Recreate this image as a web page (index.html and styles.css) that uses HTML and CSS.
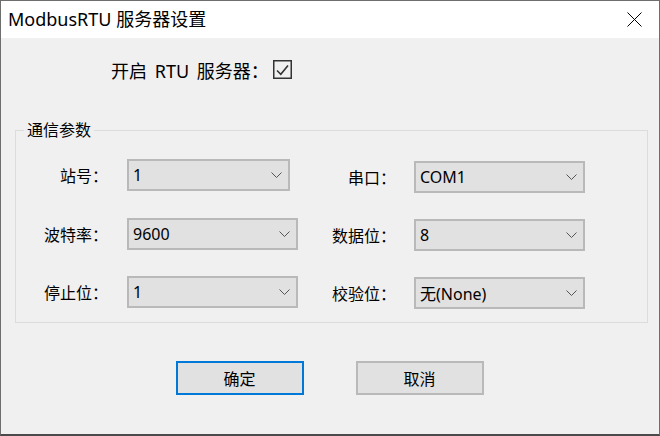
FILE: index.html
```html
<!DOCTYPE html>
<html lang="zh-CN">
  <head>
    <meta charset="UTF-8" />
    <meta name="viewport" content="width=device-width, initial-scale=1.0" />
    <title>ModbusRTU 服务器设置</title>
    <link rel="stylesheet" href="styles.css">
  </head>
  <body>
    <div class="dialog">
      <div class="title-bar">
        <span class="title">ModbusRTU 服务器设置</span>
        <svg class="close" width="15" height="15" viewBox="0 0 15 15">
          <path d="M0.5 0.5 L14.5 14.5 M14.5 0.5 L0.5 14.5" stroke="#000" stroke-width="1" fill="none" />
        </svg>
      </div>

      <div class="dialog-body">
        <div class="enable-row">
          <span>开启 RTU 服务器：</span>
          <svg class="checkbox" width="19" height="19" viewBox="0 0 19 19">
            <rect x="0.75" y="0.75" width="17.5" height="17.5" stroke="#333" stroke-width="1.5" fill="none" />
            <polyline points="4,10.5 7.8,14.2 15,5.5" stroke="#333" stroke-width="1.6" fill="none" />
          </svg>
        </div>

        <fieldset class="group">
          <legend>通信参数</legend>
          <div class="columns">
            <div class="column left">
              <label>站号：</label>
              <div class="combo narrow">
                <span>1</span>
                <svg width="11" height="6" viewBox="0 0 11 6"><polyline points="0.5,0.5 5.5,5.5 10.5,0.5" stroke="#555" fill="none" /></svg>
              </div>
              <label>波特率：</label>
              <div class="combo">
                <span>9600</span>
                <svg width="11" height="6" viewBox="0 0 11 6"><polyline points="0.5,0.5 5.5,5.5 10.5,0.5" stroke="#555" fill="none" /></svg>
              </div>
              <label>停止位：</label>
              <div class="combo">
                <span>1</span>
                <svg width="11" height="6" viewBox="0 0 11 6"><polyline points="0.5,0.5 5.5,5.5 10.5,0.5" stroke="#555" fill="none" /></svg>
              </div>
            </div>

            <div class="column right">
              <label>串口：</label>
              <div class="combo">
                <span>COM1</span>
                <svg width="11" height="6" viewBox="0 0 11 6"><polyline points="0.5,0.5 5.5,5.5 10.5,0.5" stroke="#555" fill="none" /></svg>
              </div>
              <label>数据位：</label>
              <div class="combo">
                <span>8</span>
                <svg width="11" height="6" viewBox="0 0 11 6"><polyline points="0.5,0.5 5.5,5.5 10.5,0.5" stroke="#555" fill="none" /></svg>
              </div>
              <label>校验位：</label>
              <div class="combo">
                <span>无(None)</span>
                <svg width="11" height="6" viewBox="0 0 11 6"><polyline points="0.5,0.5 5.5,5.5 10.5,0.5" stroke="#555" fill="none" /></svg>
              </div>
            </div>
          </div>
        </fieldset>

        <div class="buttons">
          <button type="button" class="btn default">确定</button>
          <button type="button" class="btn">取消</button>
        </div>
      </div>
    </div>
  </body>
</html>
```

FILE: styles.css
```css
body {
  margin: 0;
  font-family: "Noto Sans", "Noto Sans CJK SC", sans-serif;
  color: #000;
  background: #f0f0f0;
}

.dialog {
  width: 660px;
  height: 436px;
  box-sizing: border-box;
  border: 1px solid #6e6e6e;
  border-bottom: 2px solid #4a4a4a;
  background: #f0f0f0;
  display: flex;
  flex-direction: column;
}

.title-bar {
  height: 37px;
  flex-shrink: 0;
  background: #fff;
  display: flex;
  align-items: center;
  justify-content: space-between;
  padding-left: 7px;
}

.title {
  font-size: 18px;
  line-height: 37px;
}

.close {
  margin-right: 17px;
}

.dialog-body {
  font-size: 16px;
}

.enable-row {
  display: flex;
  align-items: center;
  gap: 4px;
  height: 19px;
  margin-top: 22px;
  padding-left: 110px;
  font-size: 18px;
  word-spacing: 3px;
}

.checkbox {
  display: block;
}

.group {
  margin: 41px 11px 0 14px;
  padding: 0 0 13px 0;
  border: 1px solid #dcdcdc;
  min-width: 0;
}

.group legend {
  margin-left: 8px;
  padding: 0 3px;
  line-height: 20px;
}

.columns {
  display: flex;
}

.column {
  display: grid;
  align-items: center;
}

.column label {
  text-align: right;
  white-space: nowrap;
}

.column.left {
  grid-template-columns: 92px 171px;
  column-gap: 19px;
  row-gap: 24.5px;
  padding-top: 18px;
}

.column.right {
  grid-template-columns: 86px 171px;
  column-gap: 18px;
  row-gap: 26px;
  padding-top: 21px;
  margin-left: 12px;
}

.combo {
  height: 32px;
  box-sizing: border-box;
  border: 2px solid #b9b9b9;
  background: #e1e1e1;
  display: flex;
  align-items: center;
  justify-content: space-between;
  padding: 0 6px 0 4px;
}

.combo.narrow {
  width: 163px;
}

.combo svg {
  display: block;
}

.buttons {
  display: flex;
  justify-content: center;
  gap: 52px;
  margin-top: 38px;
  padding-right: 1px;
}

.btn {
  width: 128px;
  height: 34px;
  box-sizing: border-box;
  border: 2px solid #b9b9b9;
  background: #e1e1e1;
  font-family: "Noto Sans", "Noto Sans CJK SC", sans-serif;
  font-size: 16px;
  color: #000;
  padding: 0;
}

.btn.default {
  border-color: #0078d7;
}
```
